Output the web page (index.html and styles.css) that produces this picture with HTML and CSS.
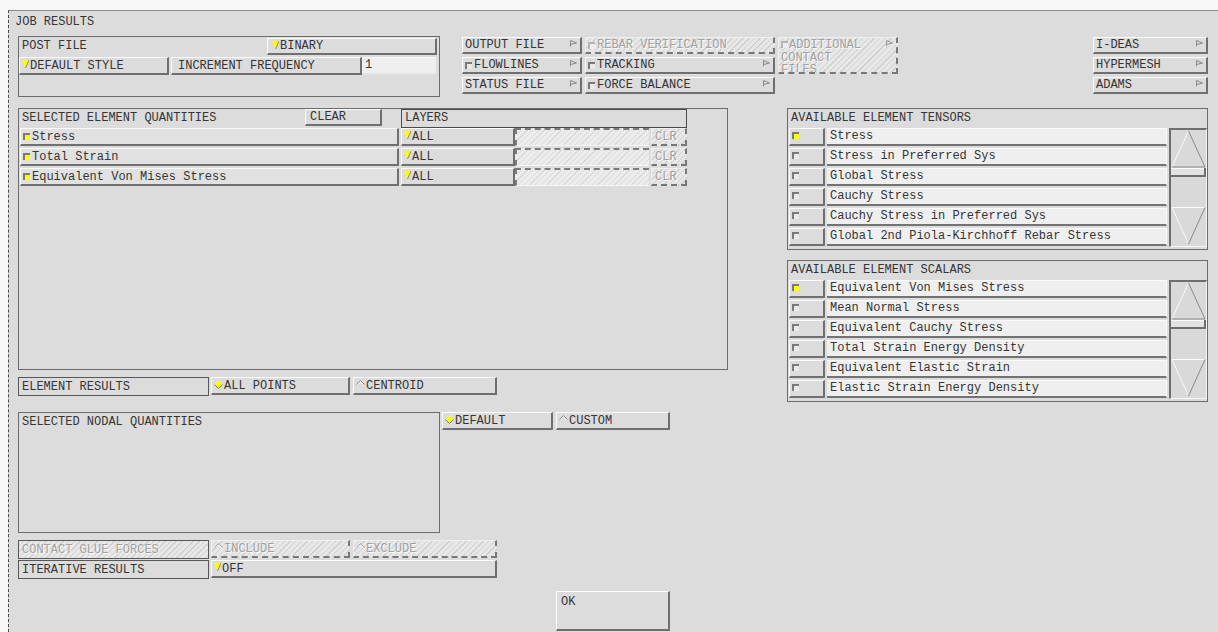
FILE: index.html
```html
<!DOCTYPE html>
<html lang="en">
<head>
<meta charset="utf-8">
<title>Job Results</title>
<link rel="stylesheet" href="styles.css">
</head>
<body>
<div class="window">
  <div class="title">JOB RESULTS</div>

  <div class="top-row">
    <div class="group post-group">
      <div class="post-line">
        <span class="glabel post-label">POST FILE</span>
        <div class="btn binary"><svg class="ico" width="7" height="8" viewBox="0 0 7 8"><path d="M0 0H7L3.5 8Z" fill="#ffff00"/><path d="M7 0L3.5 8" stroke="#8d8d5a" fill="none"/></svg><span>BINARY</span></div>
      </div>
      <div class="post-line line2">
        <div class="btn style-btn"><svg class="ico" width="7" height="8" viewBox="0 0 7 8"><path d="M0 0H7L3.5 8Z" fill="#ffff00"/><path d="M7 0L3.5 8" stroke="#8d8d5a" fill="none"/></svg><span>DEFAULT STYLE</span></div>
        <div class="btn freq-btn"><span>INCREMENT FREQUENCY</span></div>
        <div class="field freq-field">1</div>
      </div>
    </div>

    <div class="file-grid">
      <div class="btn"><span>OUTPUT FILE</span><svg class="casc" width="7" height="7" viewBox="0 0 7 7"><path d="M0.5 0.5V6.5M0.5 0.5L6.5 3L0.5 4.5" stroke="#8a8a8a" fill="none"/></svg></div>
      <div class="btn dis"><span class="chk dim"></span><span>REBAR VERIFICATION</span></div>
      <div class="btn dis additional"><span class="add-text"><span class="chk dim"></span>ADDITIONAL<br>CONTACT<br>FILES</span><svg class="casc" width="7" height="7" viewBox="0 0 7 7"><path d="M0.5 0.5V6.5M0.5 0.5L6.5 3L0.5 4.5" stroke="#9a9a9a" fill="none"/></svg></div>
      <div class="btn"><span class="chk"></span><span>FLOWLINES</span><svg class="casc" width="7" height="7" viewBox="0 0 7 7"><path d="M0.5 0.5V6.5M0.5 0.5L6.5 3L0.5 4.5" stroke="#8a8a8a" fill="none"/></svg></div>
      <div class="btn"><span class="chk"></span><span>TRACKING</span><svg class="casc" width="7" height="7" viewBox="0 0 7 7"><path d="M0.5 0.5V6.5M0.5 0.5L6.5 3L0.5 4.5" stroke="#8a8a8a" fill="none"/></svg></div>
      <div class="btn"><span>STATUS FILE</span><svg class="casc" width="7" height="7" viewBox="0 0 7 7"><path d="M0.5 0.5V6.5M0.5 0.5L6.5 3L0.5 4.5" stroke="#8a8a8a" fill="none"/></svg></div>
      <div class="btn"><span class="chk"></span><span>FORCE BALANCE</span><svg class="casc" width="7" height="7" viewBox="0 0 7 7"><path d="M0.5 0.5V6.5M0.5 0.5L6.5 3L0.5 4.5" stroke="#8a8a8a" fill="none"/></svg></div>
    </div>

    <div class="export-col">
      <div class="btn"><span>I-DEAS</span><svg class="casc" width="7" height="7" viewBox="0 0 7 7"><path d="M0.5 0.5V6.5M0.5 0.5L6.5 3L0.5 4.5" stroke="#8a8a8a" fill="none"/></svg></div>
      <div class="btn"><span>HYPERMESH</span><svg class="casc" width="7" height="7" viewBox="0 0 7 7"><path d="M0.5 0.5V6.5M0.5 0.5L6.5 3L0.5 4.5" stroke="#8a8a8a" fill="none"/></svg></div>
      <div class="btn"><span>ADAMS</span><svg class="casc" width="7" height="7" viewBox="0 0 7 7"><path d="M0.5 0.5V6.5M0.5 0.5L6.5 3L0.5 4.5" stroke="#8a8a8a" fill="none"/></svg></div>
    </div>
  </div>

  <div class="main-row">
    <div class="left-col">
      <div class="group elem-box">
        <div class="elem-head">
          <span class="glabel elem-label">SELECTED ELEMENT QUANTITIES</span>
          <div class="btn clear-btn"><span>CLEAR</span></div>
          <div class="layers-head">LAYERS</div>
        </div>
        <div class="qty-row">
          <div class="btn name-btn"><span class="chk on"></span><span>Stress</span></div>
          <div class="btn all-btn"><svg class="ico" width="7" height="8" viewBox="0 0 7 8"><path d="M0 0H7L3.5 8Z" fill="#ffff00"/><path d="M7 0L3.5 8" stroke="#8d8d5a" fill="none"/></svg><span>ALL</span></div>
          <div class="layer-field"></div>
          <div class="btn dis clr-btn"><span>CLR</span></div>
        </div>
        <div class="qty-row">
          <div class="btn name-btn"><span class="chk on"></span><span>Total Strain</span></div>
          <div class="btn all-btn"><svg class="ico" width="7" height="8" viewBox="0 0 7 8"><path d="M0 0H7L3.5 8Z" fill="#ffff00"/><path d="M7 0L3.5 8" stroke="#8d8d5a" fill="none"/></svg><span>ALL</span></div>
          <div class="layer-field"></div>
          <div class="btn dis clr-btn"><span>CLR</span></div>
        </div>
        <div class="qty-row">
          <div class="btn name-btn"><span class="chk on"></span><span>Equivalent Von Mises Stress</span></div>
          <div class="btn all-btn"><svg class="ico" width="7" height="8" viewBox="0 0 7 8"><path d="M0 0H7L3.5 8Z" fill="#ffff00"/><path d="M7 0L3.5 8" stroke="#8d8d5a" fill="none"/></svg><span>ALL</span></div>
          <div class="layer-field"></div>
          <div class="btn dis clr-btn"><span>CLR</span></div>
        </div>
      </div>

      <div class="opt-row results-row">
        <div class="label-box">ELEMENT RESULTS</div>
        <div class="btn radio-a"><svg class="ico" width="9" height="9" viewBox="0 0 9 9"><path d="M4.5 0.5L8.5 4.5L4.5 8.5L0.5 4.5Z" fill="#ffff00"/><path d="M8.5 4.5L4.5 8.5L0.5 4.5" stroke="#7a7a7a" fill="none"/></svg><span>ALL POINTS</span></div>
        <div class="btn radio-b"><svg class="ico" width="9" height="9" viewBox="0 0 9 9"><path d="M0.5 4.5L4.5 0.5L8.5 4.5" stroke="#8c8c8c" fill="none"/><path d="M1.8 4.6L4.5 1.9L7.2 4.6" stroke="#f7f7f7" fill="none"/></svg><span>CENTROID</span></div>
      </div>

      <div class="nodal-row">
        <div class="group nodal-box"><span class="glabel">SELECTED NODAL QUANTITIES</span></div>
        <div class="btn default-btn"><svg class="ico" width="9" height="9" viewBox="0 0 9 9"><path d="M4.5 0.5L8.5 4.5L4.5 8.5L0.5 4.5Z" fill="#ffff00"/><path d="M8.5 4.5L4.5 8.5L0.5 4.5" stroke="#7a7a7a" fill="none"/></svg><span>DEFAULT</span></div>
        <div class="btn custom-btn"><svg class="ico" width="9" height="9" viewBox="0 0 9 9"><path d="M0.5 4.5L4.5 0.5L8.5 4.5" stroke="#8c8c8c" fill="none"/><path d="M1.8 4.6L4.5 1.9L7.2 4.6" stroke="#f7f7f7" fill="none"/></svg><span>CUSTOM</span></div>
      </div>

      <div class="opt-row glue-row">
        <div class="label-box dis">CONTACT GLUE FORCES</div>
        <div class="btn dis radio-a"><svg class="ico" width="9" height="9" viewBox="0 0 9 9"><path d="M0.5 4.5L4.5 0.5L8.5 4.5" stroke="#a8a8a8" fill="none"/><path d="M1.8 4.6L4.5 1.9L7.2 4.6" stroke="#f7f7f7" fill="none"/></svg><span>INCLUDE</span></div>
        <div class="btn dis radio-b"><svg class="ico" width="9" height="9" viewBox="0 0 9 9"><path d="M0.5 4.5L4.5 0.5L8.5 4.5" stroke="#a8a8a8" fill="none"/><path d="M1.8 4.6L4.5 1.9L7.2 4.6" stroke="#f7f7f7" fill="none"/></svg><span>EXCLUDE</span></div>
      </div>

      <div class="opt-row iter-row">
        <div class="label-box">ITERATIVE RESULTS</div>
        <div class="btn off-btn"><svg class="ico" width="7" height="8" viewBox="0 0 7 8"><path d="M0 0H7L3.5 8Z" fill="#ffff00"/><path d="M7 0L3.5 8" stroke="#8d8d5a" fill="none"/></svg><span>OFF</span></div>
      </div>

      <div class="ok-row">
        <div class="btn ok-btn">OK</div>
      </div>
    </div>

    <div class="right-col">
      <div class="group list-box">
        <div class="list-head">AVAILABLE ELEMENT TENSORS</div>
        <div class="list-body">
          <div class="list-rows">
            <div class="list-row"><div class="btn chk-btn"><span class="chk on"></span></div><div class="list-field">Stress</div></div>
            <div class="list-row"><div class="btn chk-btn"><span class="chk"></span></div><div class="list-field">Stress in Preferred Sys</div></div>
            <div class="list-row"><div class="btn chk-btn"><span class="chk"></span></div><div class="list-field">Global Stress</div></div>
            <div class="list-row"><div class="btn chk-btn"><span class="chk"></span></div><div class="list-field">Cauchy Stress</div></div>
            <div class="list-row"><div class="btn chk-btn"><span class="chk"></span></div><div class="list-field">Cauchy Stress in Preferred Sys</div></div>
            <div class="list-row"><div class="btn chk-btn"><span class="chk"></span></div><div class="list-field">Global 2nd Piola-Kirchhoff Rebar Stress</div></div>
          </div>
          <div class="scroll">
            <svg width="35" height="116" viewBox="0 0 35 116">
              <path d="M17.5 1L1 37" stroke="#fafafa" fill="none"/>
              <path d="M17.5 1L34 37H1" stroke="#8a8a8a" fill="none"/>
              <rect x="0" y="38" width="35" height="9" fill="#e2e2e2"/>
              <path d="M0 38.5H35" stroke="#fafafa"/>
              <path d="M0 46H34V38" stroke="#6e6e6e" stroke-width="2" fill="none"/>
              <path d="M1 77.5H34M1 77.5L17.5 114" stroke="#fafafa" fill="none"/>
              <path d="M34 77.5L17.5 114" stroke="#8a8a8a" fill="none"/>
            </svg>
          </div>
        </div>
      </div>

      <div class="group list-box scalars">
        <div class="list-head">AVAILABLE ELEMENT SCALARS</div>
        <div class="list-body">
          <div class="list-rows">
            <div class="list-row"><div class="btn chk-btn"><span class="chk on"></span></div><div class="list-field">Equivalent Von Mises Stress</div></div>
            <div class="list-row"><div class="btn chk-btn"><span class="chk"></span></div><div class="list-field">Mean Normal Stress</div></div>
            <div class="list-row"><div class="btn chk-btn"><span class="chk"></span></div><div class="list-field">Equivalent Cauchy Stress</div></div>
            <div class="list-row"><div class="btn chk-btn"><span class="chk"></span></div><div class="list-field">Total Strain Energy Density</div></div>
            <div class="list-row"><div class="btn chk-btn"><span class="chk"></span></div><div class="list-field">Equivalent Elastic Strain</div></div>
            <div class="list-row"><div class="btn chk-btn"><span class="chk"></span></div><div class="list-field">Elastic Strain Energy Density</div></div>
          </div>
          <div class="scroll">
            <svg width="35" height="116" viewBox="0 0 35 116">
              <path d="M17.5 1L1 37" stroke="#fafafa" fill="none"/>
              <path d="M17.5 1L34 37H1" stroke="#8a8a8a" fill="none"/>
              <rect x="0" y="38" width="35" height="9" fill="#e2e2e2"/>
              <path d="M0 38.5H35" stroke="#fafafa"/>
              <path d="M0 46H34V38" stroke="#6e6e6e" stroke-width="2" fill="none"/>
              <path d="M1 77.5H34M1 77.5L17.5 114" stroke="#fafafa" fill="none"/>
              <path d="M34 77.5L17.5 114" stroke="#8a8a8a" fill="none"/>
            </svg>
          </div>
        </div>
      </div>
    </div>
  </div>
</div>
</body>
</html>
```

FILE: styles.css
```css
* { box-sizing: border-box; }

html, body { margin: 0; padding: 0; }

body {
  width: 1218px;
  height: 632px;
  overflow: hidden;
  background: #f8f8f8;
  font-family: "Liberation Mono", "DejaVu Sans Mono", monospace;
  font-size: 12px;
  line-height: 14px;
  color: #353535;
}

/* dialog frame */
.window {
  margin: 10px 0 0 8px;
  height: 622px;
  border-top: 1px solid #8c8c8c;
  border-left: 1px dashed #4a4a4a;
  background: #dcdcdc;
  padding: 0 10px 0 9px;
  overflow: hidden;
}

.title {
  height: 25px;
  padding-top: 4px;
  margin-left: -3px;
}

/* raised Motif-style push button */
.btn {
  display: flex;
  align-items: center;
  gap: 1px;
  background: #dcdcdc;
  border-style: solid;
  border-width: 1px 2px 2px 1px;
  border-color: #fbfbfb #6f6f6f #6f6f6f #fbfbfb;
  padding: 0 3px 0 2px;
  white-space: nowrap;
  overflow: hidden;
}

.btn.dis {
  background: repeating-linear-gradient(135deg, #e7e7e7 0 3px, #d0d0d0 3px 4px);
  color: #a2a2a2;
  text-shadow: 1px 1px 0 #f8f8f8;
  border-right-style: dashed;
  border-bottom-style: dashed;
  border-color: #efefef #777 #777 #efefef;
}

.ico { flex: none; align-self: flex-start; margin-top: 2px; }

.casc { flex: none; margin-left: auto; align-self: flex-start; margin-top: 2px; }

/* toggle indicator square */
.chk {
  display: inline-block;
  flex: none;
  width: 7px;
  height: 7px;
  border-top: 2px solid #7a7a7a;
  border-left: 2px solid #7a7a7a;
  background: #e9e9e9;
  margin-right: 1px;
}
.chk.on { background: #ffff00; }
.chk.dim { border-color: #b5b5b5; background: #eeeeee; }

.glabel { padding-left: 2px; }

.group { border: 1px solid #6c6c6c; }

/* top row */
.top-row {
  display: flex;
  align-items: flex-start;
  height: 61px;
}

.post-group {
  width: 422px;
  height: 61px;
  padding: 1px 2px 0 0;
  display: flex;
  flex-direction: column;
  gap: 2px;
}

.post-line { display: flex; height: 17px; }
.post-line.line2 { height: 18px; }
.post-label { padding-left: 3px; line-height: 17px; }

.binary { margin-left: auto; width: 170px; padding-left: 4px; }
.style-btn { width: 150px; }
.freq-btn { width: 191px; margin-left: 2px; padding-left: 6px; }

.field {
  background: #efefef;
  border-top: 1px solid #f8f8f8;
  border-bottom: 2px solid #e4e4e4;
  padding-left: 3px;
  line-height: 15px;
}
.freq-field { width: 74px; }

.file-grid {
  display: grid;
  grid-template-columns: 120px 190px 120px;
  grid-template-rows: 17px 17px 17px;
  gap: 3px;
  margin: 1px 0 0 22px;
}

.additional {
  grid-row: span 2;
  align-items: flex-start;
}
.add-text { display: block; line-height: 12.5px; padding-top: 1px; }

.export-col {
  margin: 1px 0 0 auto;
  width: 115px;
  display: grid;
  grid-template-rows: 17px 17px 17px;
  gap: 3px;
}

/* main area */
.main-row {
  display: flex;
  margin-top: 11px;
}

.left-col { width: 710px; }

.right-col { width: 421px; margin-left: auto; }

.elem-box {
  height: 262px;
  padding-left: 1px;
}

.elem-head { display: flex; height: 19px; }
.elem-label { width: 285px; line-height: 19px; }
.clear-btn { width: 77px; height: 17px; padding-left: 4px; }
.layers-head {
  margin-left: 19px;
  width: 286px;
  height: 19px;
  border: 1px solid #4c4c4c;
  padding-left: 3px;
  line-height: 17px;
}

.qty-row { display: flex; height: 18px; margin-bottom: 2px; }
.name-btn { width: 379px; background: #e1e1e1; }
.all-btn { width: 114px; margin-left: 2px; }
.layer-field {
  width: 134px;
  background: repeating-linear-gradient(135deg, #ececec 0 3px, #dadada 3px 4px);
  border-top: 2px dashed #7a7a7a;
  border-left: 2px dashed #7a7a7a;
  border-bottom: 1px solid #f6f6f6;
}
.clr-btn { width: 36px; margin-left: 2px; padding-left: 3px; }

.opt-row { display: flex; align-items: flex-start; height: 19px; margin-top: 7px; }
.label-box {
  width: 191px;
  height: 19px;
  border: 1px solid #575757;
  padding-left: 3px;
  display: flex;
  align-items: center;
}
.label-box.dis {
  background: repeating-linear-gradient(135deg, #e7e7e7 0 3px, #d0d0d0 3px 4px);
  color: #a2a2a2;
  text-shadow: 1px 1px 0 #f8f8f8;
}
.radio-a { width: 139px; height: 18px; margin-left: 2px; }
.radio-b { width: 144px; height: 18px; margin-left: 3px; }
.off-btn { width: 286px; height: 18px; margin-left: 2px; }

.glue-row { margin-top: 7px; }
.iter-row { margin-top: 1px; }

.nodal-row { display: flex; align-items: flex-start; margin-top: 16px; }
.nodal-box { width: 422px; height: 121px; padding-top: 2px; }
.nodal-box .glabel { padding-left: 3px; }
.default-btn { width: 111px; height: 18px; margin-left: 2px; }
.custom-btn { width: 114px; height: 18px; margin-left: 3px; }

.ok-row { margin-top: 12px; }
.ok-btn {
  margin-left: 538px;
  width: 114px;
  height: 40px;
  align-items: flex-start;
  padding: 3px 4px;
}

/* list boxes with scroll bars */
.list-box { height: 142px; padding-left: 1px; }
.list-box.scalars { margin-top: 10px; }
.list-head { height: 19px; line-height: 19px; padding-left: 2px; }
.list-body { display: flex; gap: 2px; }
.list-rows { width: 378px; }
.list-row { display: flex; height: 18px; margin-bottom: 2px; gap: 2px; }
.chk-btn { width: 36px; align-items: flex-start; padding: 3px 0 0 2px; }
.list-field {
  width: 340px;
  background: #efefef;
  border-top: 1px solid #fafafa;
  border-right: 1px solid #fafafa;
  border-bottom: 2px solid #737373;
  padding-left: 3px;
  line-height: 15px;
  white-space: nowrap;
  overflow: hidden;
}

.scroll {
  width: 38px;
  height: 119px;
  border-style: solid;
  border-width: 2px 1px 1px 2px;
  border-color: #6e6e6e #f6f6f6 #f6f6f6 #6e6e6e;
  background: #d9d9d9;
}
.scroll svg { display: block; }
```
